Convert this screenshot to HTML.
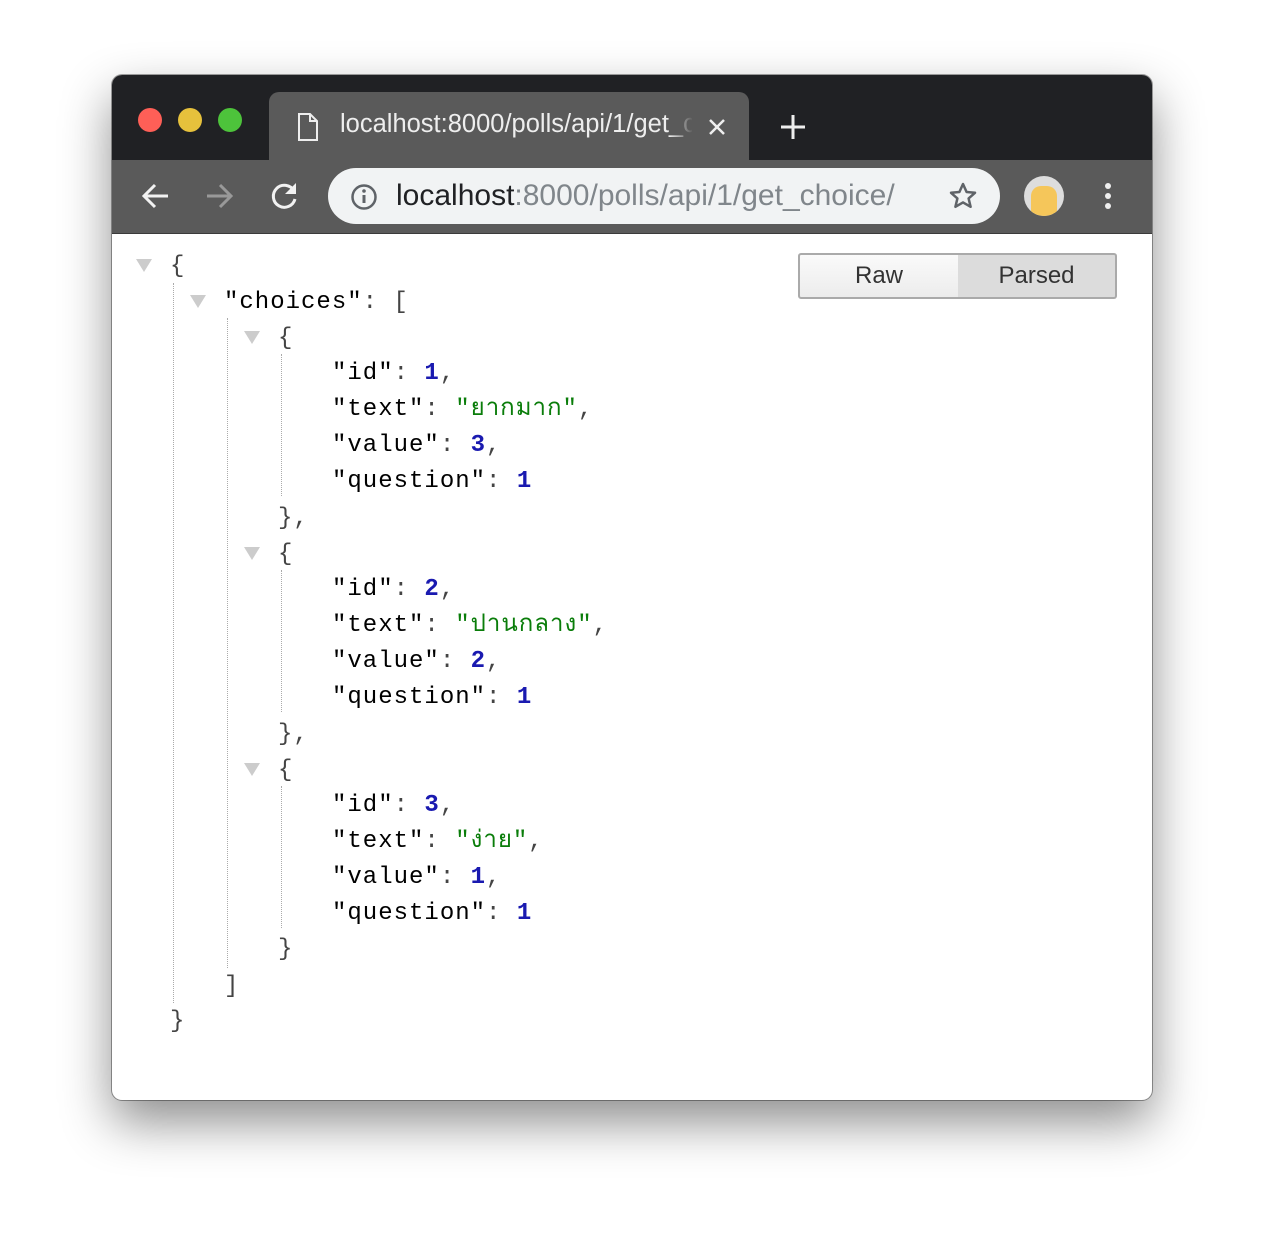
<!DOCTYPE html>
<html><head><meta charset="utf-8"><style>
body{margin:0;width:1264px;height:1248px;background:#fff;position:relative;overflow:hidden;font-family:"Liberation Sans",sans-serif}
.win{position:absolute;left:112px;top:75px;width:1040px;height:1025px;border-radius:10px;overflow:hidden;background:#fff;box-shadow:0 22px 50px rgba(0,0,0,.45),0 0 0 1px rgba(0,0,0,.35)}
.tabbar{position:absolute;left:0;top:0;width:1040px;height:85px;background:#202124}
.tool{position:absolute;left:0;top:85px;width:1040px;height:73px;background:#5a5a5a;border-bottom:1px solid #3a3a3a}
.dot{position:absolute;top:33px;width:24px;height:24px;border-radius:50%}
.tab{position:absolute;left:157px;top:17px;width:480px;height:70px;background:#5a5a5a;border-radius:10px 10px 0 0}
.tabt{position:absolute;left:71px;top:18px;color:#eee;font-size:25.5px;white-space:nowrap;width:352px;overflow:hidden}
.url{position:absolute;left:68px;top:11px;font-size:30px;color:#202124;white-space:nowrap}
.url span{color:#80868b}
.omni{position:absolute;left:216px;top:93px;width:672px;height:56px;border-radius:28px;background:#f1f3f4}
.code{position:absolute;left:0;top:2px;font-family:"Liberation Mono","Noto Sans CJK SC",monospace;font-size:24px;letter-spacing:1px}
.l{position:absolute;height:36px;line-height:36px;white-space:pre;color:#444}
.k{color:#000}.n{color:#1a1ab0;font-weight:bold}.s{color:#0a7d0a}
.tri{position:absolute;width:0;height:0;border-left:8px solid transparent;border-right:8px solid transparent;border-top:13px solid #ccc}
.vl{position:absolute;width:0;border-left:1px dotted #aaa}
.btn{position:absolute;top:253px;height:42px;border:2px solid #aaa;font-size:24px;color:#333;text-align:center;line-height:42px;box-sizing:content-box}
</style></head><body>
<div class="win">
 <div class="tabbar"></div>
 <div class="dot" style="left:26px;background:#fe5f57"></div>
 <div class="dot" style="left:66px;background:#e6c13c"></div>
 <div class="dot" style="left:106px;background:#4dc33b"></div>
 <div class="tab">
  <svg style="position:absolute;left:28px;top:20px" width="22" height="30" viewBox="0 0 22 30"><path d="M2 2h11l7 7v19H2z M13 2v7h7" fill="none" stroke="#eee" stroke-width="2"/></svg>
  <div class="tabt">localhost:8000/polls/api/1/get_choice</div>
  <div style="position:absolute;left:400px;top:15px;width:30px;height:40px;background:linear-gradient(90deg,rgba(90,90,90,0),#5a5a5a 80%)"></div>
  <svg style="position:absolute;left:440px;top:27px" width="16" height="16"><path d="M1 1L15 15M15 1L1 15" stroke="#eee" stroke-width="2.5"/></svg>
 </div>
 <svg style="position:absolute;left:668px;top:39px" width="26" height="26"><path d="M13 1v24M1 13h24" stroke="#eee" stroke-width="3"/></svg>
 <div class="tool"></div>
 <svg style="position:absolute;left:30px;top:107px" width="28" height="28" viewBox="0 0 28 28"><path d="M26 14H3M13 3L2 14l11 11" fill="none" stroke="#f2f2f2" stroke-width="3"/></svg>
 <svg style="position:absolute;left:93px;top:107px" width="28" height="28" viewBox="0 0 28 28"><path d="M2 14h23M15 3l11 11-11 11" fill="none" stroke="#999" stroke-width="3"/></svg>
 <svg style="position:absolute;left:158px;top:106px" width="30" height="30" viewBox="0 0 30 30"><path d="M24 10A11 11 0 1 0 25 18" fill="none" stroke="#f2f2f2" stroke-width="3"/><path d="M26 2v11H15z" fill="#f2f2f2"/></svg>
 <div class="omni">
  <svg style="position:absolute;left:22px;top:15px" width="28" height="28" viewBox="0 0 28 28"><circle cx="14" cy="14" r="11.5" fill="none" stroke="#5f6368" stroke-width="2.5"/><path d="M14 12v8" stroke="#5f6368" stroke-width="3"/><circle cx="14" cy="8" r="1.8" fill="#5f6368"/></svg>
  <div class="url">localhost<span>:8000/polls/api/1/get_choice/</span></div>
  <svg style="position:absolute;left:620px;top:13px" width="30" height="30" viewBox="0 0 30 30"><path d="M15 3l3.6 8 8.4.8-6.4 5.6 2 8.4L15 21.4 7.4 25.8l2-8.4L3 11.8l8.4-.8z" fill="none" stroke="#5f6368" stroke-width="2.5" stroke-linejoin="round"/></svg>
 </div>
 <div style="position:absolute;left:912px;top:101px;width:40px;height:40px;border-radius:50%;background:#ddd;overflow:hidden"><div style="position:absolute;left:7px;top:10px;width:26px;height:30px;border-radius:10px 10px 6px 6px;background:#f5c65a"></div></div>
 <div style="position:absolute;left:993px;top:108px;width:6px;height:6px;border-radius:50%;background:#eee;box-shadow:0 10px 0 #eee,0 20px 0 #eee"></div>
</div>
<div class="btn" style="left:798px;width:158px;border-radius:3px 0 0 3px;background:linear-gradient(#fafafa,#ececec)">Raw</div>
<div class="btn" style="left:958px;width:157px;border-left:0;border-radius:0 3px 3px 0;background:#dcdcdc">Parsed</div>

<div class="tri" style="left:136px;top:259px"></div>
<div class="tri" style="left:190px;top:295px"></div>
<div class="tri" style="left:244px;top:331px"></div>
<div class="tri" style="left:244px;top:547px"></div>
<div class="tri" style="left:244px;top:763px"></div>
<div class="vl" style="left:173px;top:283px;height:720px"></div>
<div class="vl" style="left:227px;top:318px;height:650px"></div>
<div class="vl" style="left:281px;top:354px;height:142px"></div>
<div class="vl" style="left:281px;top:570px;height:142px"></div>
<div class="vl" style="left:281px;top:786px;height:142px"></div>
<div class="code">
<div class="l" style="left:170px;top:247px">{</div>
<div class="l" style="left:224px;top:283px"><span class="k">"choices"</span>: [</div>
<div class="l" style="left:278px;top:319px">{</div>
<div class="l" style="left:332px;top:354px"><span class="k">"id"</span>: <span class="n">1</span>,</div>
<div class="l" style="left:332px;top:390px"><span class="k">"text"</span>: <span class="s">"ยากมาก"</span>,</div>
<div class="l" style="left:332px;top:426px"><span class="k">"value"</span>: <span class="n">3</span>,</div>
<div class="l" style="left:332px;top:462px"><span class="k">"question"</span>: <span class="n">1</span></div>
<div class="l" style="left:278px;top:499px">},</div>
<div class="l" style="left:278px;top:535px">{</div>
<div class="l" style="left:332px;top:570px"><span class="k">"id"</span>: <span class="n">2</span>,</div>
<div class="l" style="left:332px;top:606px"><span class="k">"text"</span>: <span class="s">"ปานกลาง"</span>,</div>
<div class="l" style="left:332px;top:642px"><span class="k">"value"</span>: <span class="n">2</span>,</div>
<div class="l" style="left:332px;top:678px"><span class="k">"question"</span>: <span class="n">1</span></div>
<div class="l" style="left:278px;top:715px">},</div>
<div class="l" style="left:278px;top:751px">{</div>
<div class="l" style="left:332px;top:786px"><span class="k">"id"</span>: <span class="n">3</span>,</div>
<div class="l" style="left:332px;top:822px"><span class="k">"text"</span>: <span class="s">"ง่าย"</span>,</div>
<div class="l" style="left:332px;top:858px"><span class="k">"value"</span>: <span class="n">1</span>,</div>
<div class="l" style="left:332px;top:894px"><span class="k">"question"</span>: <span class="n">1</span></div>
<div class="l" style="left:278px;top:930px">}</div>
<div class="l" style="left:224px;top:967px">]</div>
<div class="l" style="left:170px;top:1002px">}</div>
</div>
</body></html>
